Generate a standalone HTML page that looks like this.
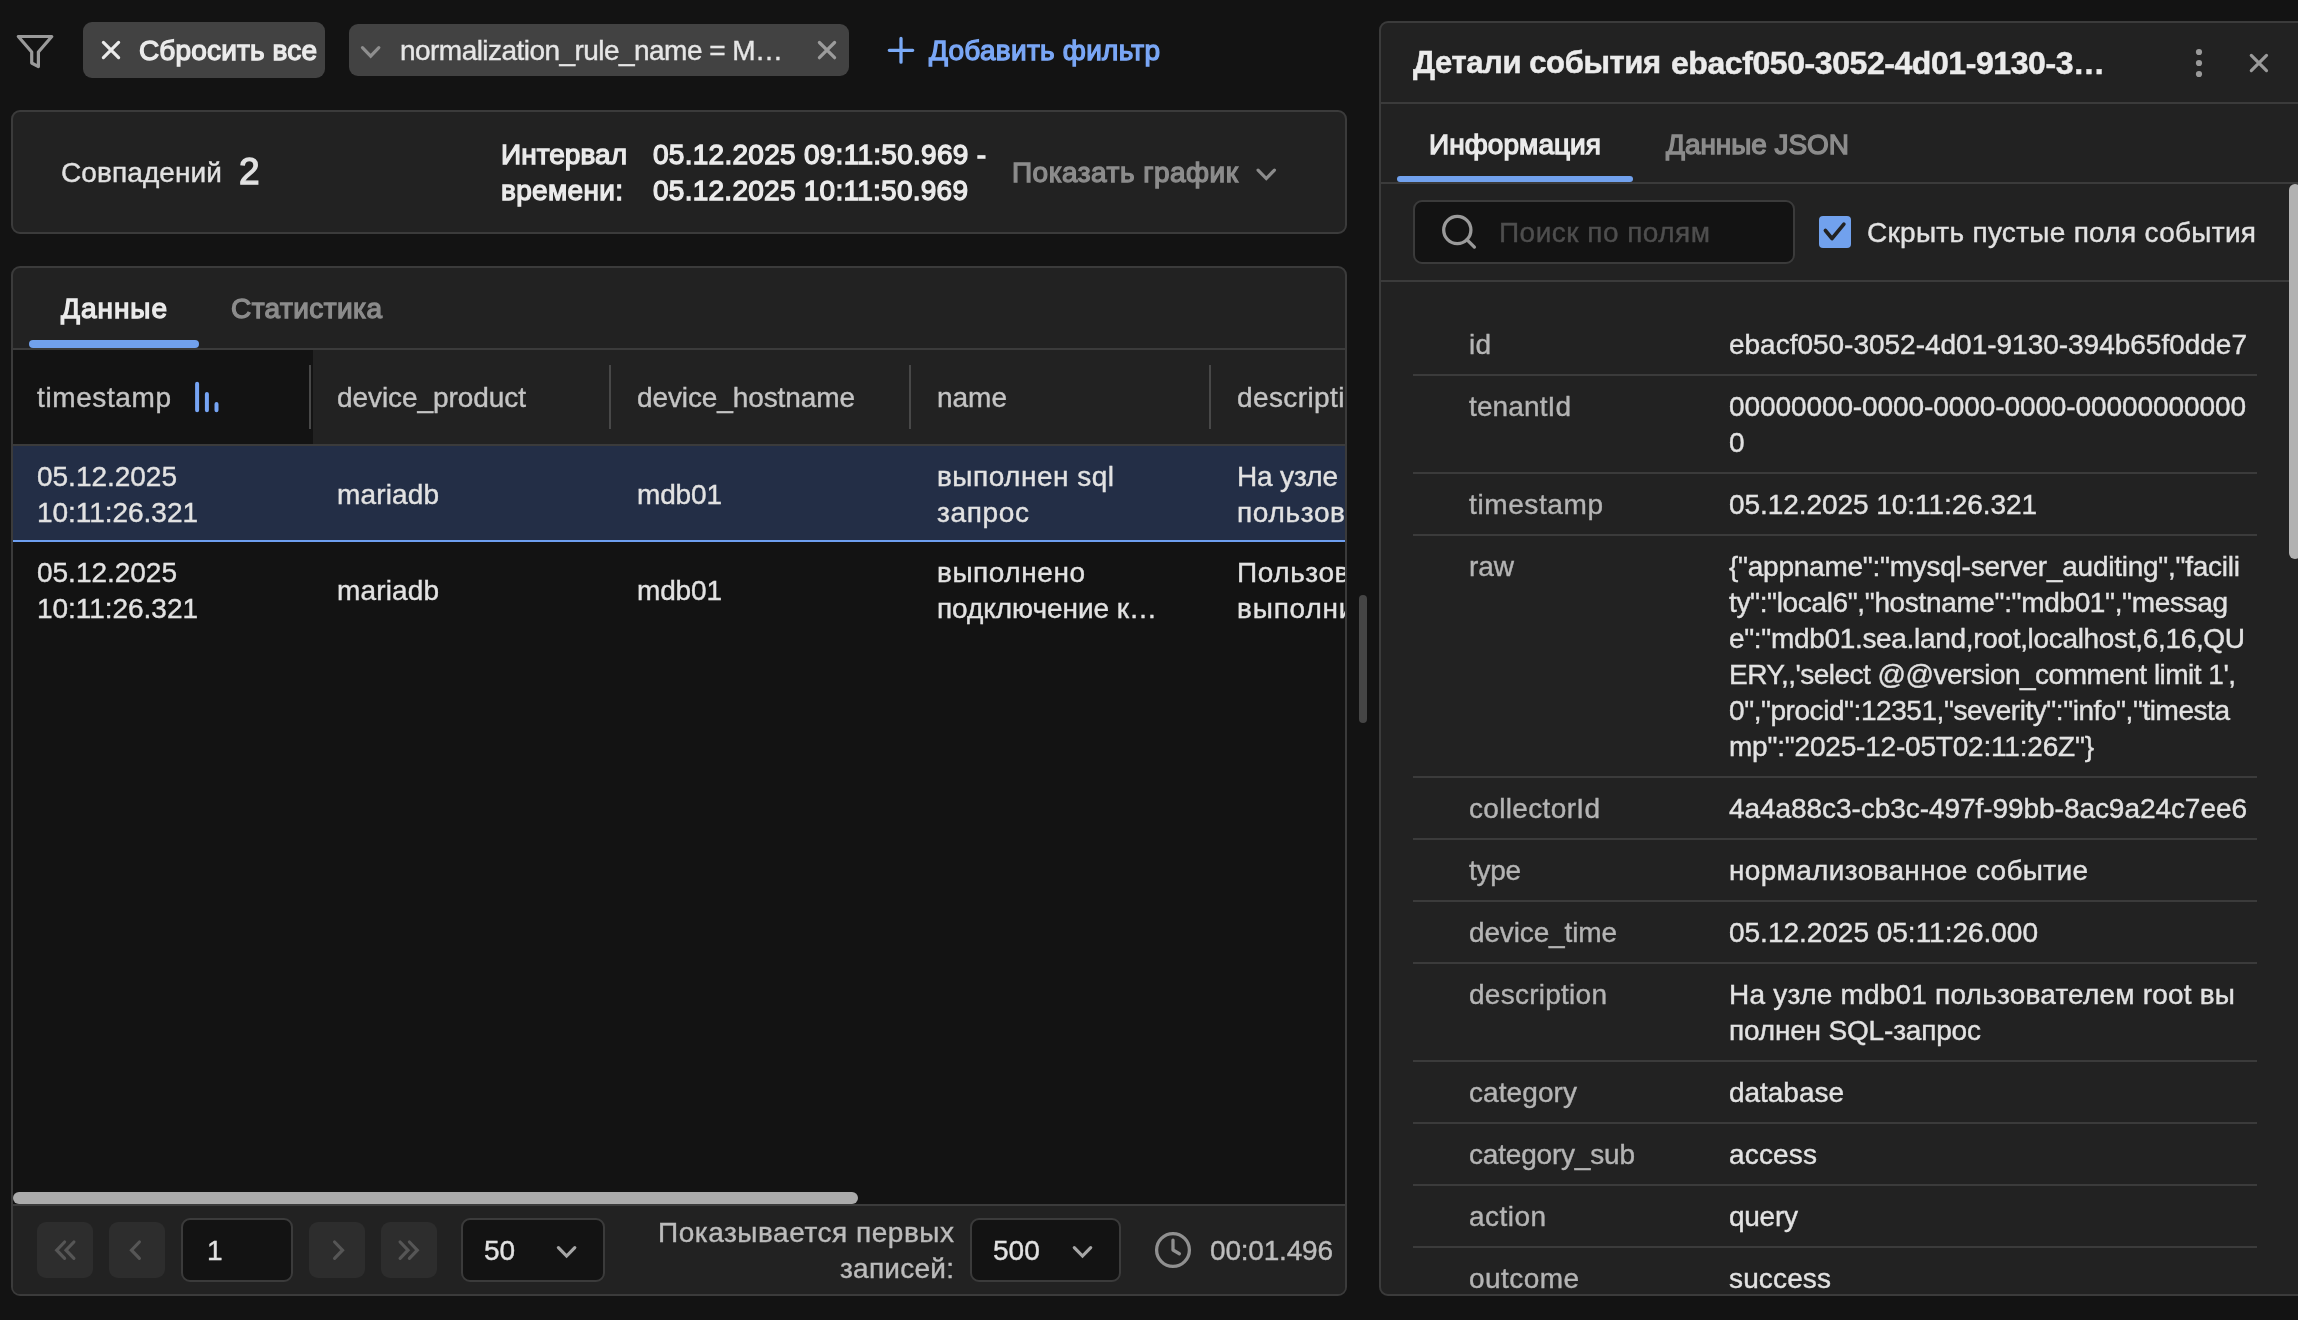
<!DOCTYPE html>
<html lang="ru"><head><meta charset="utf-8"><title>Events</title>
<style>

html,body{margin:0;padding:0;}
body{width:2298px;height:1320px;overflow:hidden;background:#131313;font-family:"Liberation Sans",sans-serif;position:relative;}
.t{position:absolute;white-space:nowrap;font-family:"Liberation Sans",sans-serif;-webkit-text-stroke:0.4px;}
.b{position:absolute;box-sizing:border-box;}
.panel{background:#222222;border:2px solid #3b3b3b;border-radius:9px;}
svg{position:absolute;overflow:visible;}
.clip{position:absolute;overflow:hidden;}
.tx{position:absolute;left:0;top:0;width:2298px;height:1320px;will-change:transform;}
</style></head><body>
<div class="b" style="left:83px;top:22px;width:242px;height:56px;background:#424242;border-radius:9px;"></div>
<div class="b" style="left:349px;top:24px;width:500px;height:52px;background:#424242;border-radius:9px;"></div>
<div class="b panel" style="left:11px;top:110px;width:1336px;height:124px;"></div>
<div class="b panel" style="left:11px;top:266px;width:1336px;height:1030px;"></div>
<div class="b" style="left:13px;top:348px;width:1332px;height:2px;background:#3b3b3b;"></div>
<div class="b" style="left:29px;top:340px;width:170px;height:8px;background:#71a1ed;border-radius:4px;"></div>
<div class="b" style="left:13px;top:350px;width:300px;height:94px;background:#131313;"></div>
<div class="b" style="left:309px;top:365px;width:2px;height:64px;background:#484848;"></div>
<div class="b" style="left:609px;top:365px;width:2px;height:64px;background:#484848;"></div>
<div class="b" style="left:909px;top:365px;width:2px;height:64px;background:#484848;"></div>
<div class="b" style="left:1209px;top:365px;width:2px;height:64px;background:#484848;"></div>
<div class="b" style="left:13px;top:444px;width:1332px;height:2px;background:#3b3b3b;"></div>
<div class="b" style="left:13px;top:446px;width:1332px;height:94px;background:#232e46;"></div>
<div class="b" style="left:13px;top:540px;width:1332px;height:2px;background:#6e9ff0;"></div>
<div class="b" style="left:13px;top:542px;width:1332px;height:662px;background:#131313;"></div>
<div class="b" style="left:1359px;top:595px;width:8px;height:128px;background:#454545;border-radius:4px;"></div>
<div class="b" style="left:13px;top:1192px;width:845px;height:12px;background:#ababab;border-radius:6px;"></div>
<div class="b" style="left:13px;top:1204px;width:1332px;height:2px;background:#3b3b3b;"></div>
<div class="b" style="left:13px;top:1206px;width:1332px;height:88px;background:#222222;border-radius:0 0 7px 7px;"></div>
<div class="b" style="left:37px;top:1222px;width:56px;height:56px;background:#2d2d2d;border-radius:9px;"></div>
<div class="b" style="left:109px;top:1222px;width:56px;height:56px;background:#2d2d2d;border-radius:9px;"></div>
<div class="b" style="left:309px;top:1222px;width:56px;height:56px;background:#2d2d2d;border-radius:9px;"></div>
<div class="b" style="left:381px;top:1222px;width:56px;height:56px;background:#2d2d2d;border-radius:9px;"></div>
<div class="b" style="left:181px;top:1218px;width:112px;height:64px;background:#131313;border:2px solid #3b3b3b;border-radius:9px;"></div>
<div class="b" style="left:461px;top:1218px;width:144px;height:64px;background:#131313;border:2px solid #3b3b3b;border-radius:9px;"></div>
<div class="b" style="left:970px;top:1218px;width:151px;height:64px;background:#131313;border:2px solid #3b3b3b;border-radius:9px;"></div>
<div class="b panel" style="left:1379px;top:21px;width:941px;height:1275px;"></div>
<div class="b" style="left:1381px;top:102px;width:917px;height:2px;background:#3b3b3b;"></div>
<div class="b" style="left:1381px;top:182px;width:917px;height:2px;background:#3b3b3b;"></div>
<div class="b" style="left:1397px;top:176px;width:236px;height:6px;background:#71a1ed;border-radius:3px;"></div>
<div class="b" style="left:1413px;top:200px;width:382px;height:64px;background:#131313;border:2px solid #3b3b3b;border-radius:9px;"></div>
<div class="b" style="left:1819px;top:216px;width:32px;height:32px;background:#71a1ed;border-radius:4px;"></div>
<div class="b" style="left:1381px;top:280px;width:917px;height:2px;background:#3b3b3b;"></div>
<div class="b" style="left:2289px;top:184px;width:12px;height:375px;background:#b2b2b2;border-radius:6px;"></div>
<div class="b" style="left:1413px;top:374px;width:844px;height:2px;background:#3b3b3b;"></div>
<div class="b" style="left:1413px;top:472px;width:844px;height:2px;background:#3b3b3b;"></div>
<div class="b" style="left:1413px;top:534px;width:844px;height:2px;background:#3b3b3b;"></div>
<div class="b" style="left:1413px;top:776px;width:844px;height:2px;background:#3b3b3b;"></div>
<div class="b" style="left:1413px;top:838px;width:844px;height:2px;background:#3b3b3b;"></div>
<div class="b" style="left:1413px;top:900px;width:844px;height:2px;background:#3b3b3b;"></div>
<div class="b" style="left:1413px;top:962px;width:844px;height:2px;background:#3b3b3b;"></div>
<div class="b" style="left:1413px;top:1060px;width:844px;height:2px;background:#3b3b3b;"></div>
<div class="b" style="left:1413px;top:1122px;width:844px;height:2px;background:#3b3b3b;"></div>
<div class="b" style="left:1413px;top:1184px;width:844px;height:2px;background:#3b3b3b;"></div>
<div class="b" style="left:1413px;top:1246px;width:844px;height:2px;background:#3b3b3b;"></div>
<svg style="left:0;top:0" width="2298" height="1320" viewBox="0 0 2298 1320"><path d="M18.3 36.5 H51.8 L38.4 52 V66.6 L31.7 63 V52 Z" fill="none" stroke="#9a9a9a" stroke-width="3.2" stroke-linejoin="round"/>
<path d="M103.40 42.40 L118.60 57.60 M118.60 42.40 L103.40 57.60" stroke="#ebebeb" stroke-width="3.2" stroke-linecap="round" fill="none"/>
<path d="M362.45 47.70 L370.65 56.10 L378.85 47.70" stroke="#8e8e8e" stroke-width="3.2" stroke-linecap="round" fill="none"/>
<path d="M819.40 42.50 L834.60 57.70 M834.60 42.50 L819.40 57.70" stroke="#9c9c9c" stroke-width="3.2" stroke-linecap="round" fill="none"/>
<path d="M901 38.4 V62.2 M889.3 50.3 H912.7" stroke="#7aaaf7" stroke-width="3.3" stroke-linecap="round" fill="none"/>
<path d="M1258.05 170.10 L1266.25 178.50 L1274.45 170.10" stroke="#8c8c8c" stroke-width="3.2" stroke-linecap="round" fill="none"/>
<path d="M197.1 383.8 V410.2 M206.9 393.9 V410.2 M216.5 403.9 V410.2" stroke="#76a4f4" stroke-width="4" stroke-linecap="round" fill="none"/>
<path d="M64.60 1242.00 L56.70 1250.20 L64.60 1258.40" stroke="#565656" stroke-width="3.2" stroke-linecap="round" fill="none"/>
<path d="M73.90 1242.00 L66.00 1250.20 L73.90 1258.40" stroke="#565656" stroke-width="3.2" stroke-linecap="round" fill="none"/>
<path d="M139.40 1242.00 L131.50 1250.20 L139.40 1258.40" stroke="#565656" stroke-width="3.2" stroke-linecap="round" fill="none"/>
<path d="M334.60 1242.00 L342.50 1250.20 L334.60 1258.40" stroke="#565656" stroke-width="3.2" stroke-linecap="round" fill="none"/>
<path d="M400.10 1242.00 L408.00 1250.20 L400.10 1258.40" stroke="#565656" stroke-width="3.2" stroke-linecap="round" fill="none"/>
<path d="M409.40 1242.00 L417.30 1250.20 L409.40 1258.40" stroke="#565656" stroke-width="3.2" stroke-linecap="round" fill="none"/>
<path d="M558.40 1247.60 L566.60 1256.00 L574.80 1247.60" stroke="#a6a6a6" stroke-width="3.2" stroke-linecap="round" fill="none"/>
<path d="M1074.30 1247.60 L1082.50 1256.00 L1090.70 1247.60" stroke="#a6a6a6" stroke-width="3.2" stroke-linecap="round" fill="none"/>
<circle cx="1173" cy="1250" r="16.4" stroke="#909090" stroke-width="3.3" fill="none"/><path d="M1173 1240.2 V1250 L1179.4 1253.7" stroke="#909090" stroke-width="3.3" fill="none" stroke-linecap="round" stroke-linejoin="round"/>
<circle cx="2199" cy="52" r="3.1" fill="#9a9a9a"/><circle cx="2199" cy="63" r="3.1" fill="#9a9a9a"/><circle cx="2199" cy="74" r="3.1" fill="#9a9a9a"/>
<path d="M2251.30 55.40 L2266.50 70.60 M2266.50 55.40 L2251.30 70.60" stroke="#9a9a9a" stroke-width="3.2" stroke-linecap="round" fill="none"/>
<circle cx="1457.3" cy="230" r="13.6" stroke="#9a9a9a" stroke-width="3.3" fill="none"/><path d="M1466.9 239.6 L1474.4 247.1" stroke="#9a9a9a" stroke-width="3.3" stroke-linecap="round"/>
<path d="M1825.4 230.5 L1832 238.5 L1843.9 224.2" stroke="#222222" stroke-width="3.6" stroke-linecap="round" stroke-linejoin="round" fill="none"/></svg>
<div class="tx">
<span class="t" style="left:139px;top:33px;font-size:28px;line-height:36px;color:#ebebeb;-webkit-text-stroke:1.3px;letter-spacing:0.148px;">Сбросить все</span>
<span class="t" style="left:400px;top:33px;font-size:28px;line-height:36px;color:#e6e6e6;letter-spacing:-0.542px;">normalization_rule_name = M…</span>
<span class="t" style="left:929px;top:33px;font-size:28px;line-height:36px;color:#7aa7f6;-webkit-text-stroke:1.3px;letter-spacing:0.261px;">Добавить фильтр</span>
<span class="t" style="left:61px;top:155px;font-size:28px;line-height:36px;color:#e2e2e2;letter-spacing:0.104px;">Совпадений</span>
<span class="t" style="left:239px;top:150px;font-size:37px;line-height:44px;color:#e2e2e2;-webkit-text-stroke:1.3px;">2</span>
<span class="t" style="left:501px;top:137px;font-size:28px;line-height:36px;color:#ebebeb;-webkit-text-stroke:1.3px;letter-spacing:0.040px;">Интервал</span>
<span class="t" style="left:501px;top:173px;font-size:28px;line-height:36px;color:#ebebeb;-webkit-text-stroke:1.3px;letter-spacing:0.324px;">времени:</span>
<span class="t" style="left:653px;top:137px;font-size:28px;line-height:36px;color:#ebebeb;-webkit-text-stroke:1.3px;letter-spacing:0.273px;">05.12.2025 09:11:50.969 -</span>
<span class="t" style="left:653px;top:173px;font-size:28px;line-height:36px;color:#ebebeb;-webkit-text-stroke:1.3px;letter-spacing:0.258px;">05.12.2025 10:11:50.969</span>
<span class="t" style="left:1012px;top:155px;font-size:28px;line-height:36px;color:#8c8c8c;-webkit-text-stroke:1.3px;letter-spacing:0.493px;">Показать график</span>
<span class="t" style="left:61px;top:291px;font-size:28px;line-height:36px;color:#ebebeb;-webkit-text-stroke:1.3px;letter-spacing:0.966px;">Данные</span>
<span class="t" style="left:231px;top:291px;font-size:28px;line-height:36px;color:#8c8c8c;-webkit-text-stroke:1.3px;letter-spacing:0.438px;">Статистика</span>
<span class="t" style="left:37px;top:380px;font-size:28px;line-height:36px;color:#c4c4c4;letter-spacing:0.605px;">timestamp</span>
<span class="t" style="left:337px;top:380px;font-size:28px;line-height:36px;color:#c4c4c4;letter-spacing:-0.070px;">device_product</span>
<span class="t" style="left:637px;top:380px;font-size:28px;line-height:36px;color:#c4c4c4;letter-spacing:-0.106px;">device_hostname</span>
<span class="t" style="left:937px;top:380px;font-size:28px;line-height:36px;color:#c4c4c4;letter-spacing:-0.016px;">name</span>
<span class="t" style="left:37px;top:459px;font-size:28px;line-height:36px;color:#e2e2e2;letter-spacing:-0.016px;">05.12.2025</span>
<span class="t" style="left:37px;top:495px;font-size:28px;line-height:36px;color:#e2e2e2;letter-spacing:-0.038px;">10:11:26.321</span>
<span class="t" style="left:337px;top:477px;font-size:28px;line-height:36px;color:#e2e2e2;letter-spacing:0.138px;">mariadb</span>
<span class="t" style="left:637px;top:477px;font-size:28px;line-height:36px;color:#e2e2e2;letter-spacing:-0.156px;">mdb01</span>
<span class="t" style="left:37px;top:555px;font-size:28px;line-height:36px;color:#e2e2e2;letter-spacing:-0.016px;">05.12.2025</span>
<span class="t" style="left:37px;top:591px;font-size:28px;line-height:36px;color:#e2e2e2;letter-spacing:-0.038px;">10:11:26.321</span>
<span class="t" style="left:337px;top:573px;font-size:28px;line-height:36px;color:#e2e2e2;letter-spacing:0.138px;">mariadb</span>
<span class="t" style="left:637px;top:573px;font-size:28px;line-height:36px;color:#e2e2e2;letter-spacing:-0.156px;">mdb01</span>
<span class="t" style="left:937px;top:459px;font-size:28px;line-height:36px;color:#e2e2e2;letter-spacing:0.497px;">выполнен sql</span>
<span class="t" style="left:937px;top:495px;font-size:28px;line-height:36px;color:#e2e2e2;letter-spacing:0.656px;">запрос</span>
<span class="t" style="left:937px;top:555px;font-size:28px;line-height:36px;color:#e2e2e2;letter-spacing:0.559px;">выполнено</span>
<span class="t" style="left:937px;top:591px;font-size:28px;line-height:36px;color:#e2e2e2;letter-spacing:-0.047px;">подключение к…</span>
<span class="t" style="left:207px;top:1233px;font-size:28px;line-height:36px;color:#e2e2e2;">1</span>
<span class="t" style="left:484px;top:1233px;font-size:28px;line-height:36px;color:#e2e2e2;">50</span>
<span class="t" style="left:993px;top:1233px;font-size:28px;line-height:36px;color:#e2e2e2;">500</span>
<span class="t" style="left:658px;top:1215px;font-size:28px;line-height:36px;color:#bcbcbc;letter-spacing:0.537px;">Показывается первых</span>
<span class="t" style="left:840px;top:1251px;font-size:28px;line-height:36px;color:#bcbcbc;letter-spacing:0.254px;">записей:</span>
<span class="t" style="left:1210px;top:1233px;font-size:28px;line-height:36px;color:#bcbcbc;letter-spacing:-0.197px;">00:01.496</span>
<span class="t" style="left:1413px;top:43px;font-size:31px;line-height:40px;color:#ebebeb;font-weight:700;-webkit-text-stroke:0.5px;letter-spacing:-0.401px;">Детали события</span>
<span class="t" style="left:1671px;top:43px;font-size:32px;line-height:40px;color:#ebebeb;font-weight:700;-webkit-text-stroke:0.5px;letter-spacing:-0.429px;">ebacf050-3052-4d01-9130-3…</span>
<span class="t" style="left:1429px;top:127px;font-size:28px;line-height:36px;color:#ebebeb;-webkit-text-stroke:1.3px;letter-spacing:0.062px;">Информация</span>
<span class="t" style="left:1666px;top:127px;font-size:28px;line-height:36px;color:#8c8c8c;-webkit-text-stroke:1.3px;letter-spacing:-0.062px;">Данные JSON</span>
<span class="t" style="left:1499px;top:215px;font-size:28px;line-height:36px;color:#4e4e4e;letter-spacing:0.481px;">Поиск по полям</span>
<span class="t" style="left:1867px;top:215px;font-size:28px;line-height:36px;color:#e2e2e2;letter-spacing:0.296px;">Скрыть пустые поля события</span>
<span class="t" style="left:1469px;top:327px;font-size:28px;line-height:36px;color:#b4b4b4;letter-spacing:0.203px;">id</span>
<span class="t" style="left:1729px;top:327px;font-size:28px;line-height:36px;color:#e2e2e2;letter-spacing:-0.013px;">ebacf050-3052-4d01-9130-394b65f0dde7</span>
<span class="t" style="left:1469px;top:389px;font-size:28px;line-height:36px;color:#b4b4b4;letter-spacing:0.114px;">tenantId</span>
<span class="t" style="left:1729px;top:389px;font-size:28px;line-height:36px;color:#e2e2e2;letter-spacing:-0.090px;">00000000-0000-0000-0000-00000000000</span>
<span class="t" style="left:1729px;top:425px;font-size:28px;line-height:36px;color:#e2e2e2;">0</span>
<span class="t" style="left:1469px;top:487px;font-size:28px;line-height:36px;color:#b4b4b4;letter-spacing:0.605px;">timestamp</span>
<span class="t" style="left:1729px;top:487px;font-size:28px;line-height:36px;color:#e2e2e2;letter-spacing:-0.060px;">05.12.2025 10:11:26.321</span>
<span class="t" style="left:1469px;top:549px;font-size:28px;line-height:36px;color:#b4b4b4;letter-spacing:-0.062px;">raw</span>
<span class="t" style="left:1729px;top:549px;font-size:28px;line-height:36px;color:#e2e2e2;letter-spacing:-0.251px;">{"appname":"mysql-server_auditing","facili</span>
<span class="t" style="left:1729px;top:585px;font-size:28px;line-height:36px;color:#e2e2e2;letter-spacing:-0.347px;">ty":"local6","hostname":"mdb01","messag</span>
<span class="t" style="left:1729px;top:621px;font-size:28px;line-height:36px;color:#e2e2e2;letter-spacing:-0.321px;">e":"mdb01.sea.land,root,localhost,6,16,QU</span>
<span class="t" style="left:1729px;top:657px;font-size:28px;line-height:36px;color:#e2e2e2;letter-spacing:-0.516px;">ERY,,'select @@version_comment limit 1',</span>
<span class="t" style="left:1729px;top:693px;font-size:28px;line-height:36px;color:#e2e2e2;letter-spacing:-0.441px;">0","procid":12351,"severity":"info","timesta</span>
<span class="t" style="left:1729px;top:729px;font-size:28px;line-height:36px;color:#e2e2e2;letter-spacing:-0.200px;">mp":"2025-12-05T02:11:26Z"}</span>
<span class="t" style="left:1469px;top:791px;font-size:28px;line-height:36px;color:#b4b4b4;letter-spacing:0.338px;">collectorId</span>
<span class="t" style="left:1729px;top:791px;font-size:28px;line-height:36px;color:#e2e2e2;letter-spacing:-0.056px;">4a4a88c3-cb3c-497f-99bb-8ac9a24c7ee6</span>
<span class="t" style="left:1469px;top:853px;font-size:28px;line-height:36px;color:#b4b4b4;letter-spacing:-0.312px;">type</span>
<span class="t" style="left:1729px;top:853px;font-size:28px;line-height:36px;color:#e2e2e2;letter-spacing:0.337px;">нормализованное событие</span>
<span class="t" style="left:1469px;top:915px;font-size:28px;line-height:36px;color:#b4b4b4;letter-spacing:-0.141px;">device_time</span>
<span class="t" style="left:1729px;top:915px;font-size:28px;line-height:36px;color:#e2e2e2;letter-spacing:-0.015px;">05.12.2025 05:11:26.000</span>
<span class="t" style="left:1469px;top:977px;font-size:28px;line-height:36px;color:#b4b4b4;letter-spacing:0.259px;">description</span>
<span class="t" style="left:1729px;top:977px;font-size:28px;line-height:36px;color:#e2e2e2;letter-spacing:0.207px;">На узле mdb01 пользователем root вы</span>
<span class="t" style="left:1729px;top:1013px;font-size:28px;line-height:36px;color:#e2e2e2;letter-spacing:-0.176px;">полнен SQL-запрос</span>
<span class="t" style="left:1469px;top:1075px;font-size:28px;line-height:36px;color:#b4b4b4;letter-spacing:0.085px;">category</span>
<span class="t" style="left:1729px;top:1075px;font-size:28px;line-height:36px;color:#e2e2e2;letter-spacing:-0.031px;">database</span>
<span class="t" style="left:1469px;top:1137px;font-size:28px;line-height:36px;color:#b4b4b4;letter-spacing:-0.192px;">category_sub</span>
<span class="t" style="left:1729px;top:1137px;font-size:28px;line-height:36px;color:#e2e2e2;letter-spacing:0.169px;">access</span>
<span class="t" style="left:1469px;top:1199px;font-size:28px;line-height:36px;color:#b4b4b4;letter-spacing:0.456px;">action</span>
<span class="t" style="left:1729px;top:1199px;font-size:28px;line-height:36px;color:#e2e2e2;letter-spacing:-0.262px;">query</span>
<span class="t" style="left:1469px;top:1261px;font-size:28px;line-height:36px;color:#b4b4b4;letter-spacing:0.432px;">outcome</span>
<span class="t" style="left:1729px;top:1261px;font-size:28px;line-height:36px;color:#e2e2e2;letter-spacing:0.141px;">success</span>
<div class="clip" style="left:1237px;top:380px;width:108px;height:36px"><span class="t" style="left:0;top:0;font-size:28px;line-height:36px;color:#c4c4c4;letter-spacing:0.404px;">description</span></div>
<div class="clip" style="left:1237px;top:459px;width:108px;height:36px"><span class="t" style="left:0;top:0;font-size:28px;line-height:36px;color:#e2e2e2;letter-spacing:-0.169px;">На узле mdb01</span></div>
<div class="clip" style="left:1237px;top:495px;width:108px;height:36px"><span class="t" style="left:0;top:0;font-size:28px;line-height:36px;color:#e2e2e2;letter-spacing:0.664px;">пользователем</span></div>
<div class="clip" style="left:1237px;top:555px;width:108px;height:36px"><span class="t" style="left:0;top:0;font-size:28px;line-height:36px;color:#e2e2e2;letter-spacing:0.586px;">Пользователь</span></div>
<div class="clip" style="left:1237px;top:591px;width:108px;height:36px"><span class="t" style="left:0;top:0;font-size:28px;line-height:36px;color:#e2e2e2;letter-spacing:0.816px;">выполнил</span></div>
</div>
</body></html>
